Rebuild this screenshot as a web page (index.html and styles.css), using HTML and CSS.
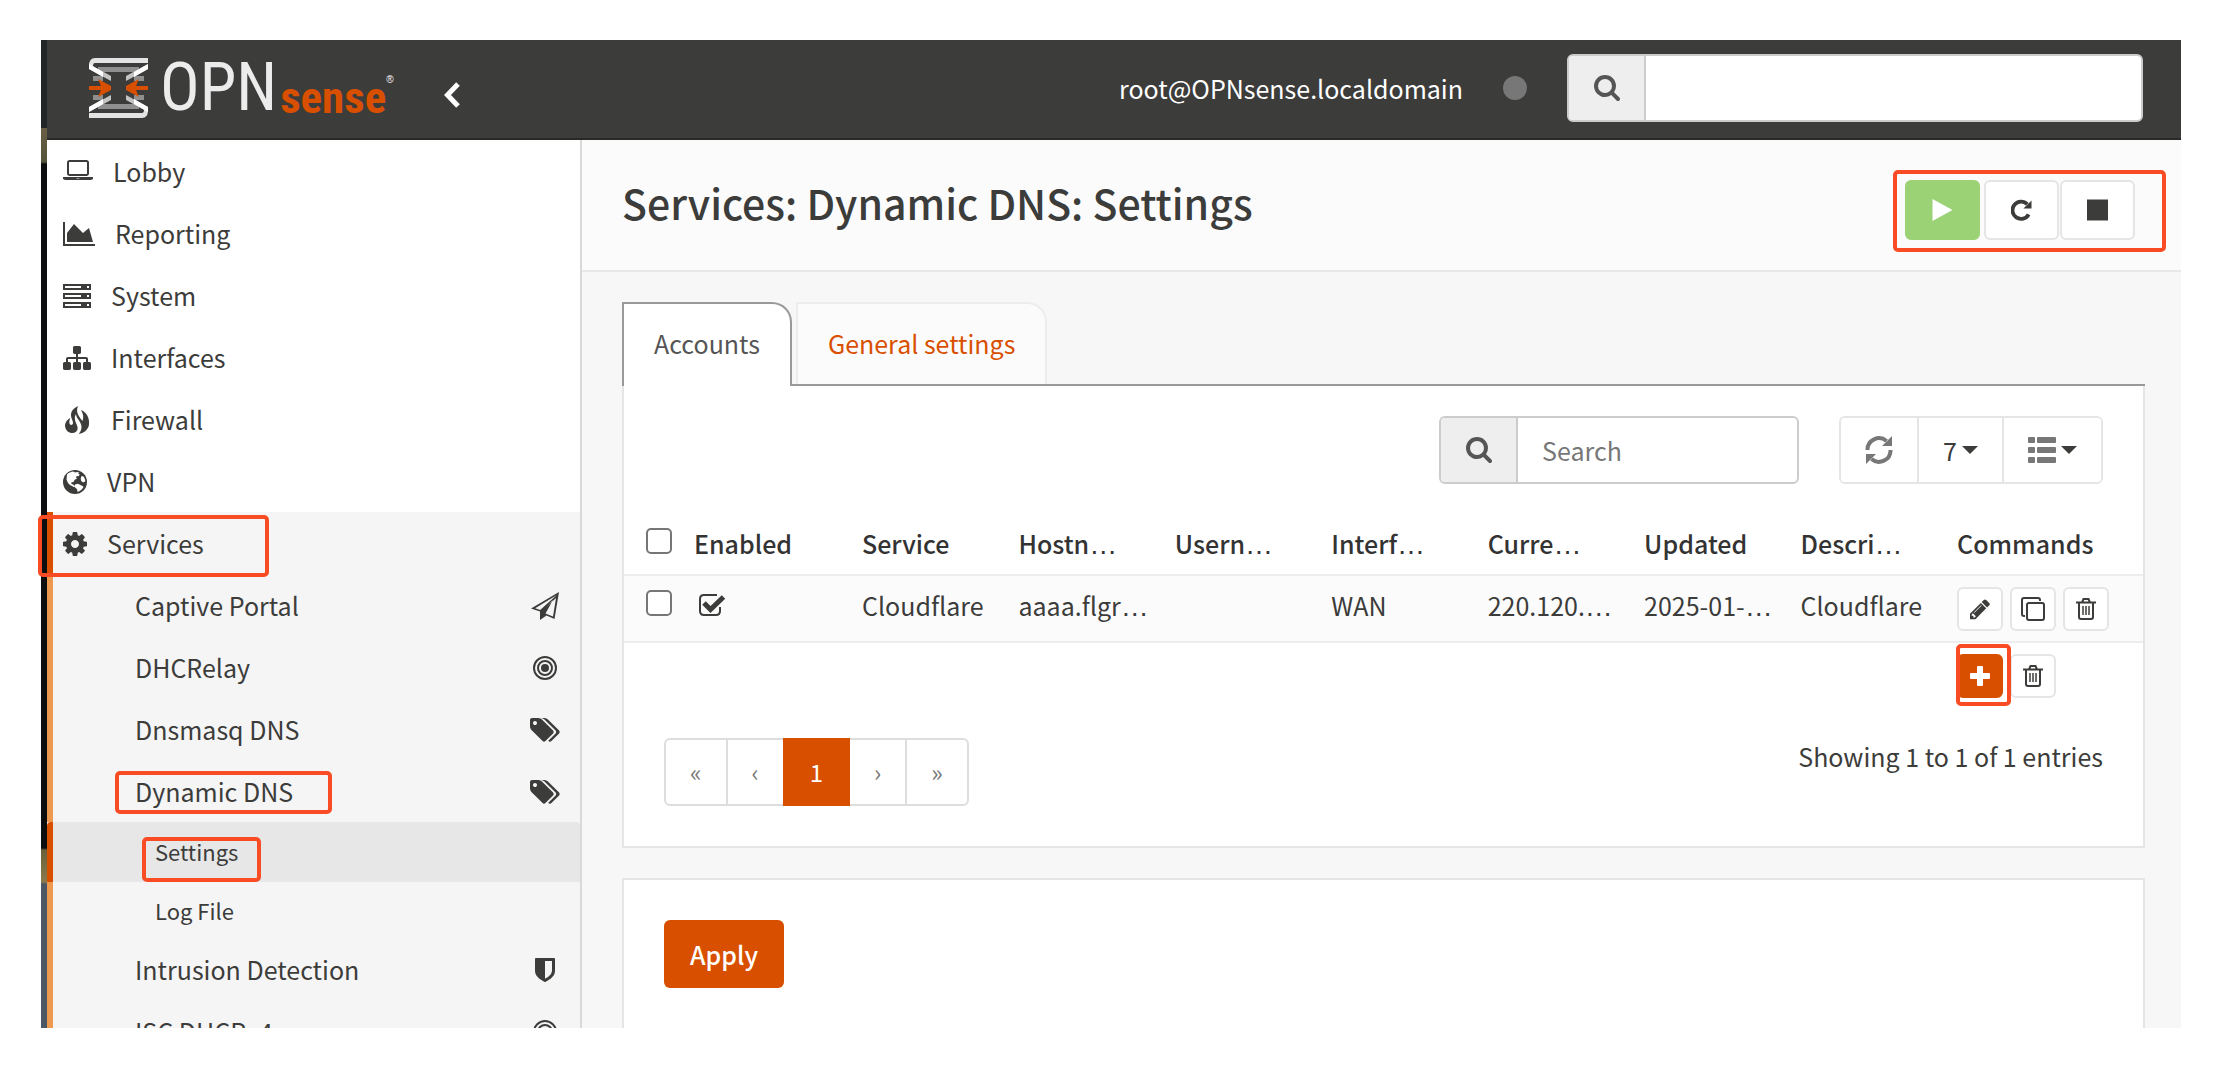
FILE: index.html
```html
<!DOCTYPE html>
<html lang="en">
<head>
  <meta charset="UTF-8">
  <title>Settings | Dynamic DNS | Services | OPNsense.localdomain</title>
  <link rel="stylesheet" href="styles.css">
</head>
<body>

<!-- icon set -->
<svg class="sprite" width="0" height="0" aria-hidden="true">
  <symbol id="i-laptop" viewBox="0 0 1920 1792"><path d="M416 1152q-66 0-113-47t-47-113v-704q0-66 47-113t113-47h1088q66 0 113 47t47 113v704q0 66-47 113t-113 47h-1088zm-32-864v704q0 13 9.500 22.500t22.500 9.500h1088q13 0 22.500-9.500t9.500-22.500v-704q0-13-9.500-22.500t-22.500-9.500h-1088q-13 0-22.500 9.500t-9.500 22.500zm1376 928h160v96q0 40-47 68t-113 28h-1600q-66 0-113-28t-47-68v-96h1760zm-720 96q16 0 16-16t-16-16h-160q-16 0-16 16t16 16h160z"/></symbol>
  <symbol id="i-chart" viewBox="0 0 2048 1792"><path d="M2048 1536v128h-2048v-1536h128v1408h1920zm-384-1024l256 896h-1664v-576l448-576 576 576z"/></symbol>
  <symbol id="i-server" viewBox="0 0 1792 1792"><path fill-rule="evenodd" d="M0 128h1792v384H0zM128 256v128h1024V256zM1536 256v128h128V256zM0 704h1792v384H0zM128 832v128h1024V832zM1536 832v128h128V832zM0 1280h1792v384H0zM128 1408v128h1024v-128zM1536 1408v128h128v-128z"/></symbol>
  <symbol id="i-sitemap" viewBox="0 0 1792 1792"><path d="M1792 1248v320q0 40-28 68t-68 28h-320q-40 0-68-28t-28-68v-320q0-40 28-68t68-28h96v-192h-512v192h96q40 0 68 28t28 68v320q0 40-28 68t-68 28h-320q-40 0-68-28t-28-68v-320q0-40 28-68t68-28h96v-192h-512v192h96q40 0 68 28t28 68v320q0 40-28 68t-68 28h-320q-40 0-68-28t-28-68v-320q0-40 28-68t68-28h96v-192q0-52 38-90t90-38h512v-192h-96q-40 0-68-28t-28-68v-320q0-40 28-68t68-28h320q40 0 68 28t28 68v320q0 40-28 68t-68 28h-96v192h512q52 0 90 38t38 90v192h96q40 0 68 28t28 68z"/></symbol>
  <symbol id="i-fire" viewBox="0 0 28 28"><path d="M15 0C9 3 7 7 8.500 12c.8 2.700 2.500 5 .8 6.600-1.300 1-3-.2-3-2.300 0-1.500.4-2.800 1-4.300C3.500 14 1.500 17.500 2.200 21c.8 4 4 6.300 7.500 6 3.600-.2 5.300-2.800 4.800-6-.4-2.800-2.700-5-2.700-8.700 0-1.700.5-3 1.200-4 .3 4.500 5.500 7.500 5.500 12.700 0 3-1.300 5-2.800 7 5-.8 9.700-4.200 10.300-9.500C26.700 12.500 24 6.500 18 4c2.500 4 2.800 7.500 1.500 11C17 11.500 12 7 15 0z"/></symbol>
  <symbol id="i-globe" viewBox="0 0 24 24"><circle cx="12" cy="12" r="12"/><path fill="#fff" d="M4 4.500C5.500 3 8 1.800 10.500 1.600l1.500.9 2-.6 2.500.8-1.500 1.100 1.800.7-1.300 1.700-1.700-.2-.8 1.500 1 1-2.300 1.300-1.200 2.200-2 .3-.2 1.400 1.700.8 2.200 1.500-1 1.200-2.700-1.400C6.500 15 4.500 13 3.500 9.500zM12 14.500l3-.8 3 1.500 2.600 1.500c-.8 2.200-3 4.300-6 5.200l-.5-2.600-2.200-2zM18.500 6l2 .6c1 1.300 1.700 3 1.900 4.600l-2.200 1.200-2-1.300-.5-2.500z"/></symbol>
  <symbol id="i-cog" viewBox="128 0 1536 1792"><path d="M1152 896q0-106-75-181t-181-75-181 75-75 181 75 181 181 75 181-75 75-181zm512-109v222q0 12-8 23t-20 13l-185 28q-19 54-39 91 35 50 107 138 10 12 10 25t-9 23q-27 37-99 108t-94 71q-12 0-26-9l-138-108q-44 23-91 38-16 136-29 186-7 28-36 28h-222q-14 0-24.500-8.500t-11.500-21.500l-28-184q-49-16-90-37l-141 107q-10 9-25 9-14 0-25-11-126-114-165-168-7-10-7-23 0-12 8-23 15-21 51-66.500t54-70.500q-27-50-41-99l-183-27q-13-2-21-12.500t-8-23.500v-222q0-12 8-23t19-13l186-28q14-46 39-92-40-57-107-138-10-12-10-24 0-10 9-23 26-36 98.500-107.500t94.500-71.500q13 0 26 10l138 107q44-23 91-38 16-136 29-186 7-28 36-28h222q14 0 24.500 8.500t11.500 21.500l28 184q49 16 90 37l142-107q9-9 24-9 13 0 25 10 129 119 165 170 7 8 7 22 0 12-8 23-15 21-51 66.500t-54 70.500q26 50 41 98l183 28q13 2 21 12.500t8 23.500z"/></symbol>
  <symbol id="i-plane" viewBox="0 0 28 28"><path fill-rule="evenodd" d="M28 0l-4.500 27-8-3.400L9 28v-8.500L0 16.500zM25.500 3.200L4.200 16.200l5 1.800zM10.800 19.500L22 8l-7.500 13.500 7.500 3L25 6z"/><path d="M9 19l12-11-9.500 13.500L9.500 28z"/></symbol>
  <symbol id="i-bullseye" viewBox="0 0 24 24"><circle cx="12" cy="12" r="11" fill="none" stroke="currentColor" stroke-width="2"/><circle cx="12" cy="12" r="7" fill="none" stroke="currentColor" stroke-width="2"/><circle cx="12" cy="12" r="4"/></symbol>
  <symbol id="i-tags" viewBox="0 0 1920 1792"><path d="M448 448q0-53-37.500-90.500t-90.500-37.500-90.500 37.500-37.500 90.500 37.500 90.500 90.500 37.500 90.500-37.500 37.500-90.500zm1067 576q0 53-37 90l-491 492q-39 37-91 37-53 0-90-37l-715-716q-38-37-64.500-101t-26.500-117v-416q0-52 38-90t90-38h416q53 0 117 26.500t102 64.500l715 714q37 39 37 91zm384 0q0 53-37 90l-491 492q-39 37-91 37-36 0-59-14t-53-45l470-470q37-37 37-90 0-52-37-91l-715-714q-38-38-102-64.500t-117-26.500h224q53 0 117 26.500t102 64.500l715 714q37 39 37 91z"/></symbol>
  <symbol id="i-shield" viewBox="0 0 1792 1792"><path d="M1344 960v-640h-448v1137q119-63 213-137 235-184 235-360zm192-768v768q0 86-33.500 170.500t-83 150-118 127.500-126.500 103-121 77.500-89.500 49.500-42.500 20q-12 6-26 6t-26-6q-16-7-42.500-20t-89.500-49.500-121-77.500-126.500-103-118-127.500-83-150-33.500-170.500v-768q0-26 19-45t45-19h1152q26 0 45 19t19 45z"/></symbol>
  <symbol id="i-search" viewBox="64 128 1664 1664"><path d="M1216 832q0-185-131.500-316.500t-316.500-131.500-316.500 131.500-131.500 316.500 131.500 316.500 316.500 131.500 316.500-131.500 131.500-316.500zm512 832q0 52-38 90t-90 38q-54 0-90-38l-343-342q-179 124-399 124-143 0-273.500-55.500t-225-150-150-225-55.500-273.500 55.500-273.500 150-225 225-150 273.500-55.500 273.500 55.500 225 150 150 225 55.500 273.500q0 220-124 399l343 343q37 37 37 90z"/></symbol>
  <symbol id="i-chevron" viewBox="0 0 16 26"><path fill="none" stroke="currentColor" stroke-width="5" d="M14 2L3.500 13 14 24"/></symbol>
  <symbol id="i-play" viewBox="0 0 20 22"><path d="M0 0l20 11L0 22z"/></symbol>
  <symbol id="i-repeat" viewBox="0 0 22 22"><path fill="none" stroke="currentColor" stroke-width="4" d="M18.500 15.500A9 9 0 1 1 17 5"/><path d="M21.500 1v8.500H13z"/></symbol>
  <symbol id="i-stop" viewBox="0 0 22 22"><path d="M0 0h22v22H0z"/></symbol>
  <symbol id="i-refresh" viewBox="0 0 28 28"><path fill="none" stroke="currentColor" stroke-width="4" d="M2.500 14A11.500 11.500 0 0 1 21.500 5M25.500 14A11.500 11.500 0 0 1 6.500 23"/><path d="M27 0v10H17zM1 28V18h10z"/></symbol>
  <symbol id="i-list" viewBox="0 0 28 28"><path d="M1 1h5q1 0 1 1v4q0 1-1 1H1q-1 0-1-1V2q0-1 1-1zM10 1h17q1 0 1 1v4q0 1-1 1H10q-1 0-1-1V2q0-1 1-1zM1 11h5q1 0 1 1v4q0 1-1 1H1q-1 0-1-1v-4q0-1 1-1zM10 11h17q1 0 1 1v4q0 1-1 1H10q-1 0-1-1v-4q0-1 1-1zM1 21h5q1 0 1 1v4q0 1-1 1H1q-1 0-1-1v-4q0-1 1-1zM10 21h17q1 0 1 1v4q0 1-1 1H10q-1 0-1-1v-4q0-1 1-1z"/></symbol>
  <symbol id="i-caret" viewBox="0 0 16 8"><path d="M0 0h16l-8 8z"/></symbol>
  <symbol id="i-check" viewBox="0 0 28 24"><path fill="none" stroke="currentColor" stroke-width="2" d="M19 2H6Q2 2 2 6v12q0 4 4 4h12q4 0 4-4v-4"/><path fill="none" stroke="currentColor" stroke-width="5" d="M6 10l6.500 6.500L25.500 4"/></symbol>
  <symbol id="i-pencil" viewBox="128 100 1536 1564"><path d="M491 1536l91-91-235-235-91 91v107h128v128h107zm523-928q0-22-22-22-10 0-17 7l-542 542q-7 7-7 17 0 22 22 22 10 0 17-7l542-542q7-7 7-17zm-54-192l416 416-832 832h-416v-416zm683 96q0 53-37 90l-166 166-416-416 166-165q36-38 90-38 53 0 91 38l235 234q37 39 37 91z"/></symbol>
  <symbol id="i-clone" viewBox="0 0 24 24"><path fill="none" stroke="currentColor" stroke-width="2" d="M4 19H3q-2 0-2-2V3q0-2 2-2h14q2 0 2 2v1M8 6h13q2 0 2 2v13q0 2-2 2H8q-2 0-2-2V8q0-2 2-2z"/></symbol>
  <symbol id="i-trash" viewBox="0 0 20 22"><path fill="none" stroke="currentColor" stroke-width="2" d="M0 4.500h20M3 5v14q0 2 2 2h10q2 0 2-2V5M6 4.500L7.500 1h5L14 4.500"/><path fill="none" stroke="currentColor" stroke-width="1.500" d="M7 8v9M10 8v9M13 8v9"/></symbol>
  <symbol id="i-plus" viewBox="0 0 20 20"><path d="M8 0h4q1 0 1 1v6h6q1 0 1 1v4q0 1-1 1h-6v6q0 1-1 1H8q-1 0-1-1v-6H1q-1 0-1-1V8q0-1 1-1h6V1q0-1 1-1z"/></symbol>
</svg>

<div class="window">
  <div class="desktop-edge"></div>
  <div class="app">

    <header class="page-head">
      <a class="brand" href="#">
        <svg class="brand-mark" viewBox="0 0 59 60" aria-hidden="true">
          <path fill="#8f8f8f" d="M9 9h41v5H9zM9 46h41v5H9zM4 18h10v5H4zM45 18h10v5H45zM4 37h10v5H4zM45 37h10v5H45z"/>
          <path fill="#c4c4c4" d="M0 6l22 12v5L0 11zM59 6L37 18v5l22-12zM0 54l22-12v-5L0 49zM59 54L37 42v-5l22 12z"/>
          <path fill="#e3e3e3" d="M6 0h53v5H6q-2 0-2 3H0Q0 0 6 0zM0 55h53q2 0 2-3h4q0 8-6 8H0z"/>
          <path fill="#fff" d="M0 6l14 8v5L0 11zM59 6l-14 8v5l14-8zM0 54l14-8v-5L0 49zM59 54l-14-8v-5l14 8z"/>
          <path fill="#d94f00" d="M0 28h12l-3-7 13 7v4L9 39l3-7H0zM59 28H47l3-7-13 7v4l13 7-3-7h12z"/>
        </svg>
        <span class="brand-opn">OPN</span><span class="brand-sense">sense</span><sup class="brand-reg">®</sup>
      </a>
      <button class="collapse" type="button" aria-label="Toggle sidebar"><svg><use href="#i-chevron"/></svg></button>
      <span class="user">root@OPNsense.localdomain</span>
      <span class="status-dot"></span>
      <div class="input-group head-search">
        <label for="menu-search"><svg><use href="#i-search"/></svg></label>
        <input id="menu-search" type="text">
      </div>
    </header>

    <div class="columns">
      <nav class="sidebar">
        <a class="item" href="#"><svg class="w30"><use href="#i-laptop"/></svg>Lobby</a>
        <a class="item" href="#"><svg class="w32"><use href="#i-chart"/></svg>Reporting</a>
        <a class="item" href="#"><svg class="w28"><use href="#i-server"/></svg>System</a>
        <a class="item" href="#"><svg class="w28"><use href="#i-sitemap"/></svg>Interfaces</a>
        <a class="item" href="#"><svg class="w28"><use href="#i-fire"/></svg>Firewall</a>
        <a class="item" href="#"><svg class="w24"><use href="#i-globe"/></svg>VPN</a>
        <div class="open">
          <a class="item active" href="#"><svg class="w24"><use href="#i-cog"/></svg>Services<span class="mark mark-services"></span></a>
          <a class="item sub" href="#">Captive Portal<svg class="w28"><use href="#i-plane"/></svg></a>
          <a class="item sub" href="#">DHCRelay<svg class="w24"><use href="#i-bullseye"/></svg></a>
          <a class="item sub" href="#">Dnsmasq DNS<svg class="w30"><use href="#i-tags"/></svg></a>
          <a class="item sub" href="#">Dynamic DNS<svg class="w30"><use href="#i-tags"/></svg><span class="mark mark-dyndns"></span></a>
          <a class="item leaf active" href="#">Settings<span class="mark mark-settings"></span></a>
          <a class="item leaf" href="#">Log File</a>
          <a class="item sub" href="#">Intrusion Detection<svg class="w28"><use href="#i-shield"/></svg></a>
          <a class="item sub" href="#">ISC DHCPv4<svg class="w24"><use href="#i-bullseye"/></svg></a>
        </div>
      </nav>

      <main class="main">
        <div class="title-bar">
          <h1>Services: Dynamic DNS: Settings</h1>
          <div class="service-control">
            <button class="btn btn-success" type="button" aria-label="Running"><svg><use href="#i-play"/></svg></button>
            <button class="btn" type="button" aria-label="Restart"><svg><use href="#i-repeat"/></svg></button>
            <button class="btn" type="button" aria-label="Stop"><svg><use href="#i-stop"/></svg></button>
            <span class="mark mark-control"></span>
          </div>
        </div>

        <div class="content">
          <div class="tabs">
            <a class="tab current" href="#">Accounts</a>
            <a class="tab" href="#">General settings</a>
          </div>

          <section class="panel grid-panel">
            <div class="toolbar">
              <div class="input-group">
                <label for="grid-search"><svg><use href="#i-search"/></svg></label>
                <input id="grid-search" type="text" placeholder="Search">
              </div>
              <div class="btn-group">
                <button type="button" aria-label="Refresh"><svg class="w28"><use href="#i-refresh"/></svg></button>
                <button type="button">7<svg class="caret"><use href="#i-caret"/></svg></button>
                <button type="button" aria-label="Columns"><svg class="w28"><use href="#i-list"/></svg><svg class="caret"><use href="#i-caret"/></svg></button>
              </div>
            </div>

            <table class="grid">
              <colgroup>
                <col class="c-select"><col class="c-enabled"><col><col><col><col><col><col><col><col class="c-commands">
              </colgroup>
              <thead>
                <tr>
                  <th><input type="checkbox" aria-label="Select all"></th>
                  <th>Enabled</th>
                  <th>Service</th>
                  <th>Hostn<span class="dots">…</span></th>
                  <th>Usern<span class="dots">…</span></th>
                  <th>Interf<span class="dots">…</span></th>
                  <th>Curre<span class="dots">…</span></th>
                  <th>Updated</th>
                  <th>Descri<span class="dots">…</span></th>
                  <th>Commands</th>
                </tr>
              </thead>
              <tbody>
                <tr>
                  <td><input type="checkbox" aria-label="Select row"></td>
                  <td><svg class="enabled"><use href="#i-check"/></svg></td>
                  <td>Cloudflare</td>
                  <td>aaaa.flgr<span class="dots">…</span></td>
                  <td></td>
                  <td>WAN</td>
                  <td>220.120.<span class="dots">…</span></td>
                  <td>2025-01-<span class="dots">…</span></td>
                  <td>Cloudflare</td>
                  <td>
                    <div class="commands">
                      <button class="btn-xs" type="button" aria-label="Edit"><svg><use href="#i-pencil"/></svg></button>
                      <button class="btn-xs" type="button" aria-label="Clone"><svg class="w24"><use href="#i-clone"/></svg></button>
                      <button class="btn-xs" type="button" aria-label="Delete"><svg><use href="#i-trash"/></svg></button>
                    </div>
                  </td>
                </tr>
              </tbody>
              <tfoot>
                <tr>
                  <td colspan="9"></td>
                  <td>
                    <div class="commands">
                      <button class="btn-xs btn-primary" type="button" aria-label="Add"><svg><use href="#i-plus"/></svg></button>
                      <button class="btn-xs" type="button" aria-label="Delete selected"><svg><use href="#i-trash"/></svg></button>
                      <span class="mark mark-add"></span>
                    </div>
                  </td>
                </tr>
              </tfoot>
            </table>

            <div class="grid-foot">
              <div class="pagination">
                <a href="#">«</a><a href="#">‹</a><a class="current" href="#">1</a><a href="#">›</a><a href="#">»</a>
              </div>
              <span>Showing 1 to 1 of 1 entries</span>
            </div>
          </section>

          <section class="panel apply-panel">
            <button class="btn-apply" type="button">Apply</button>
          </section>
        </div>
      </main>
    </div>
  </div>
</div>

</body>
</html>
```
FILE: styles.css
```css
* {
	box-sizing: border-box;
}
body {
	margin: 0;
	padding: 40px;
	background: #fff;
	color: #3c3c3b;
	font: 25px/36px "Noto Sans CJK SC", "Noto Sans", sans-serif;
}
a {
	color: inherit;
	text-decoration: none;
}
button, input {
	margin: 0;
	font: inherit;
	color: inherit;
}
button {
	display: flex;
	align-items: center;
	justify-content: center;
	padding: 0;
	background: #fff;
}
svg {
	display: block;
	flex: none;
	fill: currentColor;
}
.sprite {
	position: absolute;
}
.w24 {
	width: 24px;
	height: 28px;
}
.w28 {
	width: 28px;
	height: 28px;
}
.w30 {
	width: 30px;
	height: 28px;
}
.w32 {
	width: 32px;
	height: 28px;
}

/* frame */
.window {
	display: flex;
	height: calc(100vh - 80px);
	overflow-y: clip;
}
.desktop-edge {
	width: 7px;
	border-left: 1px solid #fff;
	background: linear-gradient(#222526 0, #222526 88px, #6b5f45 88px, #54543a 122px, #0b0d0f 124px, #0b0d0f 808px, #6b603a 810px, #8a7a4c 842px, #4b5765 844px);
}
.app {
	flex: 1;
	min-width: 0;
}

/* header */
.page-head {
	display: flex;
	align-items: center;
	height: 100px;
	padding: 0 38px 2px 42px;
	border-bottom: 2px solid #2b2828;
	background: #3c3c3b;
	color: #fff;
}
.brand {
	display: flex;
	align-items: center;
}
.brand-mark {
	width: 59px;
	height: 60px;
	margin-right: 12px;
}
.brand-opn {
	color: #ebeceb;
	font: 66px/60px "Liberation Sans Narrow", "Roboto Condensed", sans-serif;
}
.brand-sense {
	align-self: flex-end;
	margin-left: 3px;
	color: #d94f00;
	font: bold 45px/40px "Liberation Sans Narrow", "Roboto Condensed", sans-serif;
}
.brand-reg {
	align-self: flex-start;
	font: 10px/44px "Liberation Sans", sans-serif;
}
.collapse {
	margin: 14px auto 0 50px;
	border: 0;
	background: none;
}
.collapse svg {
	width: 16px;
	height: 26px;
}
.status-dot {
	width: 24px;
	height: 24px;
	margin: 0 40px;
	border-radius: 50%;
	background: #777;
}
.input-group {
	display: flex;
	width: 360px;
	height: 68px;
	border: 2px solid #ccc;
	border-radius: 6px;
	background: #fff;
	overflow: hidden;
}
.input-group label {
	display: flex;
	align-items: center;
	justify-content: center;
	width: 77px;
	border-right: 2px solid #ccc;
	background: #eee;
	color: #555;
}
.input-group label svg {
	width: 26px;
	height: 26px;
}
.input-group input {
	flex: 1;
	min-width: 0;
	padding: 0 24px;
	border: 0;
	background: none;
}
.input-group input::placeholder {
	color: #777;
	opacity: 1;
}
.head-search {
	width: 576px;
}

/* sidebar */
.columns {
	display: flex;
	min-height: calc(100% - 100px);
}
.sidebar {
	width: 535px;
	border-right: 2px solid #d9d9d9;
	background: #fff;
}
.item {
	display: flex;
	align-items: center;
	position: relative;
	height: 62px;
	padding: 0 20px 0 16px;
	gap: 20px;
}
.item svg {
	margin-top: 2px;
}
.open {
	background: #f5f5f5;
}
.open .item {
	padding-left: 10px;
	border-left: 6px solid #ed994f;
}
.open .active {
	border-left-color: #d94f00;
}
.open .sub {
	justify-content: space-between;
	padding-left: 82px;
	padding-right: 20px;
}
.open .sub .w28 {
	margin-right: 1px;
}
.open .sub .w24 {
	margin-right: 3px;
}
.open .leaf {
	height: 56px;
	padding-left: 102px;
	font-size: 22px;
}
.open .leaf.active {
	height: 60px;
	padding-bottom: 2px;
	border-radius: 4px 4px 0 0;
	background: #e7e7e7;
}

/* highlight boxes */
.mark {
	position: absolute;
	border: 4px solid #f94b24;
	border-radius: 5px;
	pointer-events: none;
}
.mark-services {
	left: -15px;
	top: 3px;
	width: 231px;
	height: 62px;
	z-index: 1;
}
.mark-dyndns {
	left: 62px;
	top: 11px;
	width: 217px;
	height: 43px;
}
.mark-settings {
	left: 89px;
	top: 15px;
	width: 119px;
	height: 45px;
}
.mark-control {
	left: -12px;
	top: -10px;
	right: -31px;
	bottom: -12px;
}
.mark-add {
	left: -1px;
	top: -10px;
	width: 55px;
	height: 62px;
}

/* main */
.main {
	flex: 1;
	min-width: 0;
	background: #f7f7f7;
}
.title-bar {
	display: flex;
	align-items: flex-start;
	justify-content: space-between;
	height: 132px;
	padding: 40px 46px 0 40px;
	border-bottom: 2px solid #e8e8e8;
	background: #fbfbfb;
}
h1 {
	margin: 0;
	font-size: 41px;
	font-weight: 500;
	line-height: 44px;
}
.service-control {
	display: flex;
	position: relative;
	gap: 1px;
}
.btn {
	width: 75px;
	height: 60px;
	border: 2px solid #e5e5e5;
	border-radius: 6px;
}
.btn svg {
	width: 21px;
	height: 22px;
}
.btn-success {
	margin-right: 3px;
	border-color: #9bd275;
	background: #9bd275;
	color: #fff;
}
.content {
	padding: 30px 36px 30px 40px;
}
.tabs {
	display: flex;
	gap: 4px;
	border-bottom: 2px solid #999;
}
.tab {
	padding: 21px 30px 23px;
	border: 2px solid #ededed;
	border-bottom: 0;
	border-top-right-radius: 20px;
	background: #fbfbfb;
	color: #d94f00;
}
.tab.current {
	margin-bottom: -2px;
	border-color: #999;
	background: #fff;
	color: #555;
}
.panel {
	border: 2px solid #e5e5e5;
	background: #fff;
}
.grid-panel {
	border-top: 0;
	padding-bottom: 40px;
}
.toolbar {
	display: flex;
	justify-content: flex-end;
	gap: 40px;
	padding: 30px 40px;
}
.btn-group {
	display: flex;
	border: 2px solid #e5e5e5;
	border-radius: 6px;
	overflow: hidden;
}
.btn-group button {
	padding: 0 24px;
	gap: 5px;
	border: 0;
}
.btn-group button + button {
	border-left: 2px solid #e5e5e5;
}
.btn-group .w28 {
	color: #777;
}
.caret {
	width: 16px;
	height: 8px;
}

/* grid */
.grid {
	width: 100%;
	table-layout: fixed;
	border-collapse: collapse;
}
.c-select {
	width: 60px;
}
.c-enabled {
	width: 168px;
}
.c-commands {
	width: 196px;
}
th, td {
	height: 67px;
	padding: 11px 0 0 10px;
	text-align: left;
	vertical-align: top;
	white-space: nowrap;
}
th {
	height: 61px;
	color: #333;
	font-weight: 500;
}
thead tr, tbody tr {
	border-bottom: 2px solid #ededed;
}
tbody tr {
	background: #fbfbfb;
}
.dots {
	font: 28px/20px "Liberation Sans", sans-serif;
}
input[type=checkbox] {
	display: block;
	appearance: none;
	width: 26px;
	height: 26px;
	margin: 3px 0 0 12px;
	border: 2px solid #767676;
	border-radius: 5px;
	background: #fff;
}
.enabled {
	width: 28px;
	height: 24px;
	margin: 6px 0 0 4px;
}
.commands {
	display: flex;
	position: relative;
	gap: 7px;
}
.btn-xs {
	width: 46px;
	height: 44px;
	border: 2px solid #e5e5e5;
	border-radius: 6px;
}
.btn-xs svg {
	width: 20px;
	height: 22px;
}
.btn-xs .w24 {
	width: 24px;
	height: 24px;
}
.btn-primary {
	border-color: #d94f00;
	background: #d94f00;
	color: #fff;
}
.grid-foot {
	display: flex;
	align-items: flex-start;
	justify-content: space-between;
	padding: 29px 40px 0;
}
.pagination {
	display: flex;
	height: 68px;
	border: 2px solid #ddd;
	border-radius: 6px;
}
.pagination a {
	padding: 14px 24px;
	color: #777;
	font-size: 24px;
}
.pagination a + a {
	border-left: 2px solid #ddd;
}
.pagination .current {
	margin: -2px 0;
	padding: 16px 27px;
	border: 0;
	background: #d94f00;
	color: #fff;
}
.pagination .current + a {
	border-left: 0;
}

.apply-panel {
	margin-top: 30px;
	padding: 40px;
}
.btn-apply {
	width: 120px;
	height: 68px;
	border: 0;
	border-radius: 6px;
	background: #d94f00;
	color: #fff;
	font-weight: 500;
}
```
